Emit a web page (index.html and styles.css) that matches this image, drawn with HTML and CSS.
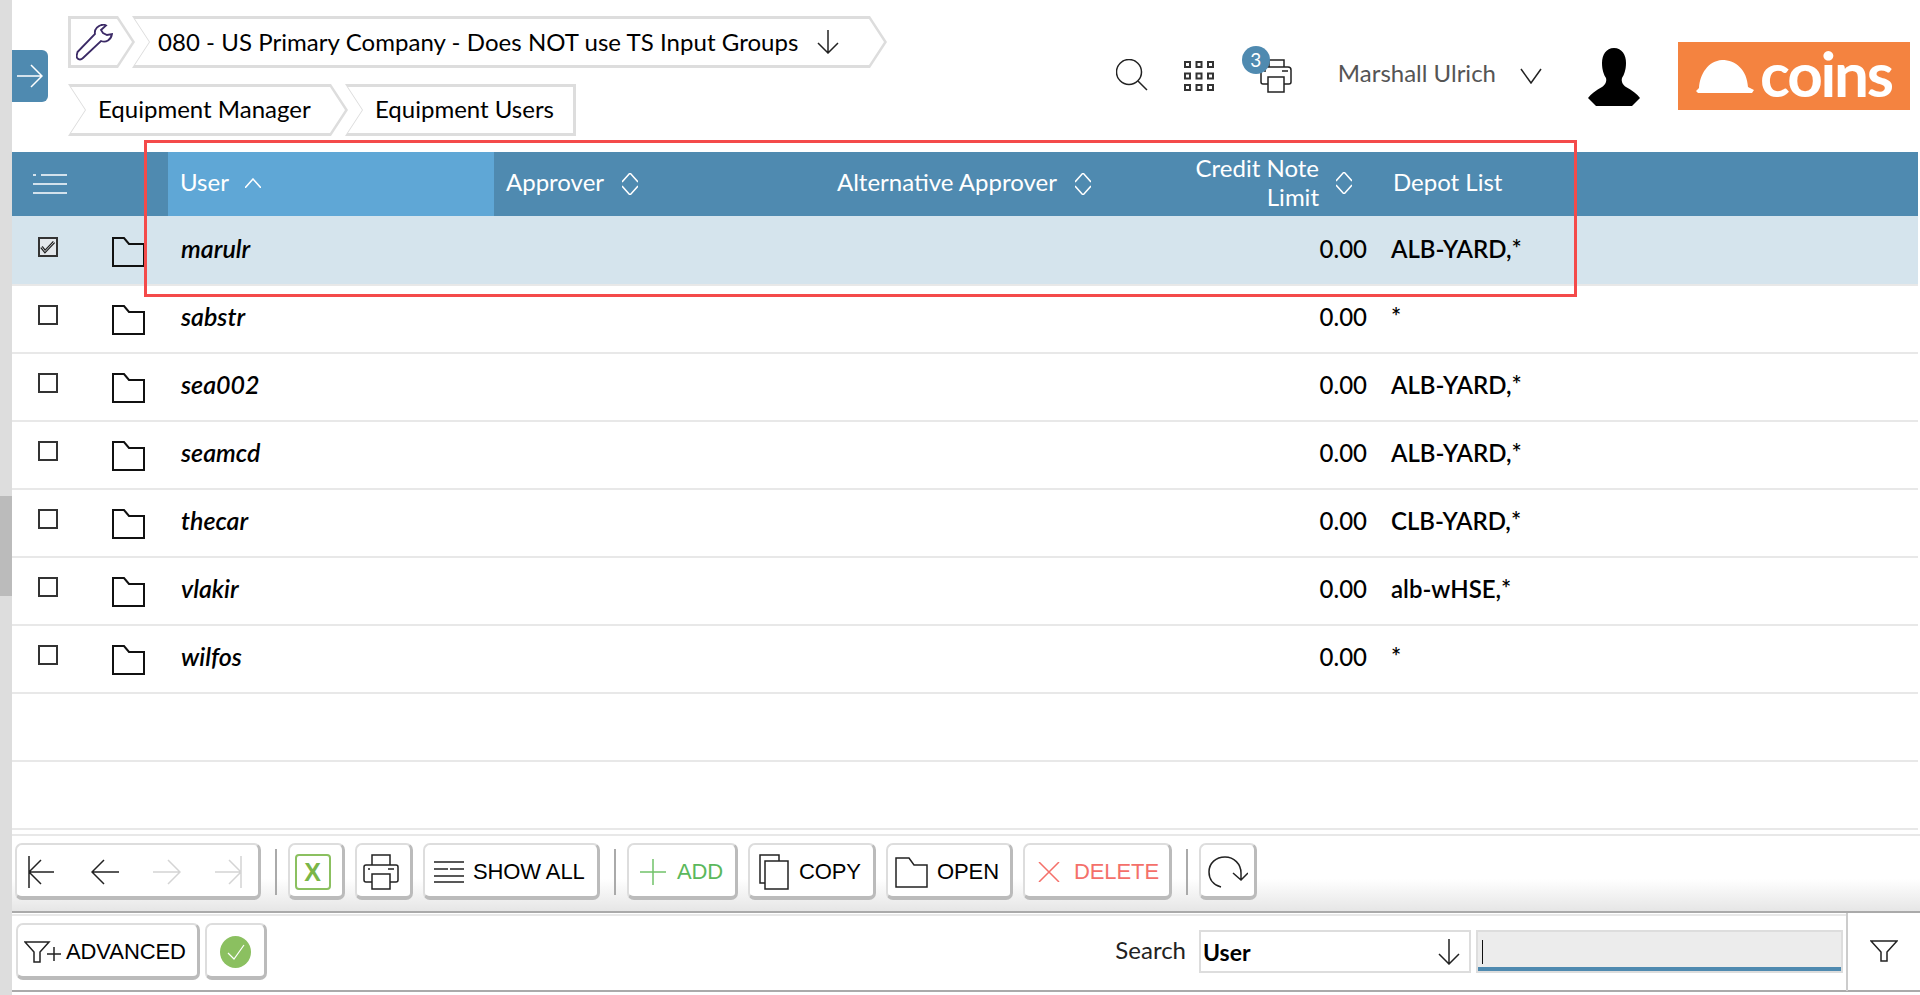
FILE: index.html
```html
<!DOCTYPE html>
<html lang="en">
<head>
    <title>Equipment Users</title>
    <link rel="stylesheet" href="styles.css">
</head>
<body>
    <div class="strip"><div class="strip-thumb"></div></div>
    <div class="main">
        <header class="top">
            <div class="side-tab">
                <svg width="26" height="24" viewBox="0 0 26 24" class="line white"><path d="M0 12H25M14 1L25 12L14 23"/></svg>
            </div>
            <div class="crumbs">
                <div class="crumb-row">
                    <div class="crumb crumb-flat crumb-tool">
                        <svg width="37" height="37" viewBox="0 0 37 37" class="line purple"><path d="M1.500 28L19 10C18 5 22 1 28 0.500L30 1.500L25 6L27 9L31 11L36 10C35 16 30 19 25 17L7 34C4 37 0 35 0.800 31Z"/></svg>
                    </div>
                    <div class="crumb crumb-company">
                        <span>080 - US Primary Company - Does NOT use TS Input Groups</span>
                        <svg width="22" height="24" viewBox="0 0 22 24" class="line dark"><path d="M11 0V23M1 13L11 23L21 13"/></svg>
                    </div>
                </div>
                <div class="crumb-row">
                    <div class="crumb crumb-manager"><span>Equipment Manager</span></div>
                    <div class="crumb crumb-end crumb-users"><span>Equipment Users</span></div>
                </div>
            </div>
            <div class="top-right">
                <svg class="line dark ic-search" width="32" height="32" viewBox="0 0 32 32"><circle cx="13" cy="13" r="12.500"/><path d="M22 22L31 31"/></svg>
                <svg class="ic-grid" width="30" height="30" viewBox="0 0 30 30" fill="none" stroke="#333" stroke-width="2">
                    <rect x="1" y="1" width="5" height="5"/><rect x="12.500" y="1" width="5" height="5"/><rect x="24" y="1" width="5" height="5"/>
                    <rect x="1" y="12.500" width="5" height="5"/><rect x="12.500" y="12.500" width="5" height="5"/><rect x="24" y="12.500" width="5" height="5"/>
                    <rect x="1" y="24" width="5" height="5"/><rect x="12.500" y="24" width="5" height="5"/><rect x="24" y="24" width="5" height="5"/>
                </svg>
                <div class="printer-wrap">
                    <svg class="line dark" width="32" height="34" viewBox="0 0 32 34"><path d="M9 8V1H24V8M8 25H3C2 25 1 24 1 23V11C1 9 2 8 4 8H28C30 8 31 9 31 11V23C31 24 30 25 29 25H24M8 18H24V33H8Z"/><path d="M4 12H6M22 12H28"/></svg>
                    <span class="badge">3</span>
                </div>
                <span class="user-name">Marshall Ulrich</span>
                <svg class="line dark ic-chevron" width="22" height="16" viewBox="0 0 22 16"><path d="M1 1L11 15L21 1"/></svg>
                <svg class="ic-avatar" width="52" height="58" viewBox="0 0 52 58"><path d="M26 0C34 0 38 7 38 15C38 22 36 27 34 30C33 34 35 37 38 39C44 42 49 46 52 50L44 58H8L0 50C3 46 8 42 14 39C17 37 19 34 18 30C16 27 14 22 14 15C14 7 18 0 26 0Z"/></svg>
                <div class="logo">
                    <svg width="58" height="33" viewBox="0 0 58 33"><path d="M0 31L3 28C4 14 12 1 26 0C40 0 51 10 52 27L58 30L56 33H2Z" fill="#fff"/></svg>
                    <span class="logo-text">coins</span>
                </div>
            </div>
        </header>

        <div class="grid-head">
            <div class="cell-menu">
                <svg width="34" height="20" viewBox="0 0 34 20" fill="none" stroke="#fff" stroke-width="1.500"><path d="M0 1H3M8 1H34M0 10H34M0 19H34"/></svg>
            </div>
            <div class="head-cell head-sorted">User
                <svg class="line white" width="16" height="10" viewBox="0 0 16 10"><path d="M0 10L8 1L16 10"/></svg>
            </div>
            <div class="head-cell">Approver
                <svg class="line white sort" width="16" height="22" viewBox="0 0 16 22"><path d="M0 9L8 0L16 9M0 13L8 22L16 13"/></svg>
            </div>
            <div class="head-cell head-alt">Alternative Approver
                <svg class="line white sort" width="16" height="22" viewBox="0 0 16 22"><path d="M0 9L8 0L16 9M0 13L8 22L16 13"/></svg>
            </div>
            <div class="head-cell head-num"><span class="head-wrap">Credit Note Limit</span>
                <svg class="line white sort" width="16" height="22" viewBox="0 0 16 22"><path d="M0 9L8 0L16 9M0 13L8 22L16 13"/></svg>
            </div>
            <div class="head-cell head-depot">Depot List</div>
        </div>

        <div class="rows">
            <div class="row row-selected">
                <div class="cell-icons">
                    <span class="checkbox"><svg width="16" height="14" viewBox="0 0 16 14" fill="none"><path d="M1.500 7L5 11.500L14 2" stroke="#222" stroke-width="3"/><path d="M1.500 7L5 11.500L14 2" stroke="#e4e8ec" stroke-width="0.800"/></svg></span>
                    <svg class="folder" width="33" height="30" viewBox="0 0 33 30"><path d="M1 1H12L17 7H32V29H1Z"/></svg>
                </div>
                <div class="cell-user">marulr</div><div></div><div></div><div class="cell-num">0.00</div><div class="cell-depot">ALB-YARD,*</div>
            </div>
            <div class="row">
                <div class="cell-icons">
                    <span class="checkbox"></span>
                    <svg class="folder" width="33" height="30" viewBox="0 0 33 30"><path d="M1 1H12L17 7H32V29H1Z"/></svg>
                </div>
                <div class="cell-user">sabstr</div><div></div><div></div><div class="cell-num">0.00</div><div class="cell-depot">*</div>
            </div>
            <div class="row">
                <div class="cell-icons">
                    <span class="checkbox"></span>
                    <svg class="folder" width="33" height="30" viewBox="0 0 33 30"><path d="M1 1H12L17 7H32V29H1Z"/></svg>
                </div>
                <div class="cell-user">sea002</div><div></div><div></div><div class="cell-num">0.00</div><div class="cell-depot">ALB-YARD,*</div>
            </div>
            <div class="row">
                <div class="cell-icons">
                    <span class="checkbox"></span>
                    <svg class="folder" width="33" height="30" viewBox="0 0 33 30"><path d="M1 1H12L17 7H32V29H1Z"/></svg>
                </div>
                <div class="cell-user">seamcd</div><div></div><div></div><div class="cell-num">0.00</div><div class="cell-depot">ALB-YARD,*</div>
            </div>
            <div class="row">
                <div class="cell-icons">
                    <span class="checkbox"></span>
                    <svg class="folder" width="33" height="30" viewBox="0 0 33 30"><path d="M1 1H12L17 7H32V29H1Z"/></svg>
                </div>
                <div class="cell-user">thecar</div><div></div><div></div><div class="cell-num">0.00</div><div class="cell-depot">CLB-YARD,*</div>
            </div>
            <div class="row">
                <div class="cell-icons">
                    <span class="checkbox"></span>
                    <svg class="folder" width="33" height="30" viewBox="0 0 33 30"><path d="M1 1H12L17 7H32V29H1Z"/></svg>
                </div>
                <div class="cell-user">vlakir</div><div></div><div></div><div class="cell-num">0.00</div><div class="cell-depot">alb-wHSE,*</div>
            </div>
            <div class="row">
                <div class="cell-icons">
                    <span class="checkbox"></span>
                    <svg class="folder" width="33" height="30" viewBox="0 0 33 30"><path d="M1 1H12L17 7H32V29H1Z"/></svg>
                </div>
                <div class="cell-user">wilfos</div><div></div><div></div><div class="cell-num">0.00</div><div class="cell-depot">*</div>
            </div>
            <div class="row"></div>
            <div class="row"></div>
        </div>

        <div class="toolbar">
            <div class="btn btn-nav">
                <svg class="line dark" width="26" height="32" viewBox="0 0 26 32"><path d="M1 0V32M26 16H1M13 4L1 16L13 28"/></svg>
                <svg class="line dark" width="28" height="26" viewBox="0 0 28 26"><path d="M28 13H1M13 1L1 13L13 25"/></svg>
                <svg class="line faint" width="28" height="26" viewBox="0 0 28 26"><path d="M0 13H27M15 1L27 13L15 25"/></svg>
                <svg class="line faint" width="27" height="32" viewBox="0 0 27 32"><path d="M26 0V32M0 16H26M14 4L26 16L14 28"/></svg>
            </div>
            <span class="sep"></span>
            <div class="btn btn-excel"><span class="excel-box">X</span></div>
            <div class="btn btn-print">
                <svg class="line dark" width="36" height="36" viewBox="0 0 36 36"><path d="M9 11V1H27V11M9 28H3C2 28 1 27 1 26V13C1 12 2 11 3 11H33C34 11 35 12 35 13V26C35 27 34 28 33 28H27M9 20H27V35H9Z"/><path d="M5 15H7M25 15H31"/></svg>
            </div>
            <div class="btn btn-text btn-showall">
                <svg class="line dark" width="30" height="22" viewBox="0 0 30 22"><path d="M0 1H30M0 8H14M16 8H30M0 15H30M0 21H30"/></svg>
                <span>SHOW ALL</span>
            </div>
            <span class="sep"></span>
            <div class="btn btn-text btn-add">
                <svg class="line green" width="26" height="26" viewBox="0 0 26 26"><path d="M13 0V26M0 13H26"/></svg>
                <span>ADD</span>
            </div>
            <div class="btn btn-text btn-copy">
                <svg class="line dark" width="30" height="36" viewBox="0 0 30 36"><path d="M6 29H1V1H20V7"/><path d="M6 7H29V35H6Z"/></svg>
                <span>COPY</span>
            </div>
            <div class="btn btn-text btn-open">
                <svg class="line dark" width="33" height="31" viewBox="0 0 33 31"><path d="M1 1H14L19 8H32V30H1Z"/></svg>
                <span>OPEN</span>
            </div>
            <div class="btn btn-text btn-delete">
                <svg class="line red" width="22" height="20" viewBox="0 0 22 20"><path d="M1 0L21 20M21 0L1 20"/></svg>
                <span>DELETE</span>
            </div>
            <span class="sep"></span>
            <div class="btn btn-refresh">
                <svg class="line dark" width="40" height="32" viewBox="0 0 40 32"><path d="M13 31C5 29 1 23 1 16C1 7 8 1 17 1C26 1 33 8 33 17V24M25 17L33 24L40 17"/></svg>
            </div>
        </div>

        <div class="search-bar">
            <div class="btn btn-text btn-advanced">
                <svg class="line dark" width="37" height="22" viewBox="0 0 37 22"><path d="M1 1H25L16 11V21H10V11Z"/><path d="M23 13H37M30 6V20"/></svg>
                <span>ADVANCED</span>
            </div>
            <div class="btn btn-ok">
                <svg width="31" height="32" viewBox="0 0 31 32"><ellipse cx="15.500" cy="16" rx="15.500" ry="16" fill="#8bc060"/><path d="M8 17L14 23L24 9" fill="none" stroke="#fff" stroke-width="1.200"/></svg>
            </div>
            <span class="search-label">Search</span>
            <div class="search-select">
                <span>User</span>
                <svg class="line dark" width="22" height="26" viewBox="0 0 22 26"><path d="M11 0V25M1 15L11 25L21 15"/></svg>
            </div>
            <div class="search-input"><span class="caret"></span></div>
            <div class="filter-cell">
                <svg class="line dark" width="28" height="22" viewBox="0 0 28 22"><path d="M1 1H27L17 12V21H11V12Z"/></svg>
            </div>
        </div>

        <div class="highlight"></div>
    </div>
</body>
</html>
```

FILE: styles.css
```css
* {
    box-sizing: border-box;
}
body {
    margin: 0;
    height: 995px;
    display: flex;
    overflow: hidden;
    background-color: #fff;
    font-family: "Lato", "Liberation Sans", sans-serif;
    font-size: 24px;
    color: #000;
}
.strip {
    width: 12px;
    flex-shrink: 0;
    background-color: #ddd;
    padding-top: 496px;
}
.strip-thumb {
    height: 100px;
    background-color: #bbb;
}
.main {
    flex: 1;
    position: relative;
    min-width: 0;
}

/* icon strokes */
.line {
    fill: none;
    stroke-width: 1.500;
    flex-shrink: 0;
}
.white { stroke: #fff; }
.dark { stroke: #222; }
.purple { stroke: #3b2a66; stroke-width: 1.800; }
.faint { stroke: #d4d4d4; }
.green { stroke: #72c26a; }
.red { stroke: #f4706a; }

/* top header */
.top {
    height: 152px;
    display: flex;
    align-items: flex-start;
}
.side-tab {
    width: 36px;
    height: 52px;
    margin-top: 50px;
    margin-right: 20px;
    background-color: #4f8ab0;
    border-radius: 0 6px 6px 0;
    display: flex;
    align-items: center;
    padding-left: 5px;
}
.crumbs {
    padding-top: 16px;
    display: flex;
    flex-direction: column;
    gap: 16px;
}
.crumb-row {
    display: flex;
    height: 52px;
}
.crumb {
    position: relative;
    height: 52px;
    display: flex;
    align-items: center;
    background-color: #ddd;
    clip-path: polygon(0 0, calc(100% - 17px) 0, 100% 50%, calc(100% - 17px) 100%, 0 100%, 17px 50%);
}
.crumb::before {
    content: "";
    position: absolute;
    inset: 3px;
    background-color: #fff;
    clip-path: polygon(0 0, calc(100% - 15px) 0, 100% 50%, calc(100% - 15px) 100%, 0 100%, 15px 50%);
}
.crumb > * {
    position: relative;
}
.crumb span {
    margin-top: -3px;
}
.crumb-flat {
    clip-path: polygon(0 0, calc(100% - 17px) 0, 100% 50%, calc(100% - 17px) 100%, 0 100%);
}
.crumb-flat::before {
    clip-path: polygon(0 0, calc(100% - 15px) 0, 100% 50%, calc(100% - 15px) 100%, 0 100%);
}
.crumb-end {
    clip-path: polygon(0 0, 100% 0, 100% 100%, 0 100%, 17px 50%);
}
.crumb-end::before {
    clip-path: polygon(0 0, 100% 0, 100% 100%, 0 100%, 15px 50%);
}
.crumb-tool {
    width: 67px;
    padding-left: 8px;
}
.crumb-company {
    width: 755px;
    margin-left: -3px;
    padding-left: 26px;
    gap: 19px;
    letter-spacing: 0.05px;
}
.crumb-company span {
    margin-top: -1px;
}
.crumb-manager {
    width: 280px;
    padding-left: 30px;
}
.crumb-users {
    width: 231px;
    margin-left: -3px;
    padding-left: 30px;
}
.top-right {
    margin-left: auto;
    padding-top: 42px;
    padding-right: 10px;
    display: flex;
    align-items: flex-start;
}
.ic-search {
    margin-top: 17px;
}
.ic-grid {
    margin-top: 19px;
    margin-left: 36px;
}
.printer-wrap {
    position: relative;
    margin-top: 17px;
    margin-left: 46px;
    line-height: 0;
}
.badge {
    position: absolute;
    left: -18px;
    top: -13px;
    width: 28px;
    height: 28px;
    border-radius: 50%;
    background-color: #4f8ab0;
    color: #fff;
    font-size: 19px;
    line-height: 27px;
    text-align: center;
}
.user-name {
    margin-left: 46px;
    margin-top: 16px;
    line-height: 30px;
    color: #555;
    white-space: nowrap;
}
.ic-chevron {
    margin-left: 24px;
    margin-top: 26px;
}
.ic-avatar {
    margin-left: 46px;
    margin-top: 6px;
}
.logo {
    width: 232px;
    height: 68px;
    margin-left: 38px;
    background-color: #f48340;
    display: flex;
    align-items: center;
    padding-left: 18px;
    gap: 6px;
}
.logo svg {
    margin-top: 1px;
}
.logo-text {
    color: #fff;
    font-size: 62px;
    font-weight: 700;
    line-height: 68px;
    letter-spacing: -2.200px;
    margin-top: -6px;
}

/* grid */
.grid-head,
.row {
    display: grid;
    grid-template-columns: 156px 326px 332px 360px 194px 1fr;
    margin-right: 2px;
}
.grid-head {
    height: 64px;
    grid-template-rows: 64px;
    background-color: #4f8ab0;
    color: #fff;
}
.cell-menu {
    padding-left: 21px;
    display: flex;
    align-items: center;
}
.head-cell {
    display: flex;
    align-items: center;
    gap: 18px;
    padding-left: 12px;
    padding-bottom: 6px;
}
.head-cell svg {
    margin-top: 6px;
}
.head-sorted {
    background-color: #5fa7d6;
    gap: 16px;
    padding-left: 12px;
}
.head-sorted svg {
    margin-top: 4px;
}
.head-alt {
    padding-left: 11px;
}
.head-num {
    justify-content: flex-end;
    text-align: right;
    padding-left: 0;
    padding-right: 28px;
    padding-bottom: 4px;
    line-height: 29px;
    gap: 17px;
}
.head-num svg {
    margin-top: 2px;
}
.head-wrap {
    width: 130px;
}
.head-depot {
    padding-left: 13px;
}
.row {
    height: 68px;
    border-bottom: 2px solid #e8e8e8;
    align-items: center;
    padding-bottom: 6px;
}
.row-selected {
    height: 70px;
    padding-bottom: 4px;
    background-color: #d5e4ed;
}
.cell-icons {
    display: flex;
    align-items: center;
    padding-left: 26px;
}
.checkbox {
    width: 20px;
    height: 20px;
    border: 2px solid #333;
    background-color: #fff;
    margin-top: -3px;
    display: flex;
    align-items: center;
    justify-content: center;
}
.row-selected .checkbox {
    background-color: #e4e8ec;
}
.folder {
    margin-left: 54px;
    fill: none;
    stroke: #111;
    stroke-width: 2;
    margin-top: 8px;
}
.cell-user {
    padding-left: 13px;
    font-size: 25px;
    font-style: italic;
    font-weight: 600;
}
.cell-num {
    text-align: right;
    padding-right: 13px;
    font-weight: 500;
}
.cell-depot {
    padding-left: 11px;
    font-weight: 600;
}

/* bottom buttons */
.toolbar {
    height: 83px;
    display: flex;
    align-items: flex-start;
    gap: 10px;
    padding: 13px 0 0 3px;
    background: linear-gradient(#fff 60%, #e6e6e6);
    border-bottom: 2px solid #aaa;
    position: relative;
}
.toolbar::before {
    content: "";
    position: absolute;
    left: 0;
    right: 0;
    top: 4px;
    height: 2px;
    background-color: #e8e8e8;
}
.btn {
    height: 57px;
    padding-top: 3px;
    display: flex;
    align-items: center;
    justify-content: center;
    background-color: #fff;
    border: 2px solid #ddd;
    border-right: 3px solid #bbb;
    border-bottom: 4px solid #bbb;
    border-radius: 7px;
    font-family: "Liberation Sans", Arial, sans-serif;
    font-size: 22px;
    letter-spacing: -0.100px;
    flex-shrink: 0;
}
.btn-text {
    justify-content: flex-start;
}
.btn-nav {
    width: 246px;
    justify-content: flex-start;
    padding-left: 11px;
    gap: 34px;
}
.btn-nav svg:nth-child(2) {
    margin-left: 3px;
}
.sep {
    width: 2px;
    height: 46px;
    margin: 6px 1px 0 4px;
    background-color: #aaa;
}
.btn-excel {
    width: 57px;
    padding-right: 7px;
}
.excel-box {
    width: 36px;
    height: 36px;
    border: 2px solid #8bc060;
    border-radius: 4px;
    color: #7ab648;
    font-weight: 700;
    font-size: 25px;
    line-height: 32px;
    text-align: center;
}
.btn-print {
    width: 58px;
    padding-right: 6px;
}
.btn-showall { width: 177px; padding-left: 9px; gap: 9px; }
.btn-add { width: 111px; padding-left: 11px; gap: 11px; color: #5bb85c; }
.btn-copy { width: 128px; padding-left: 9px; gap: 10px; }
.btn-open { width: 127px; padding-left: 7px; gap: 9px; }
.btn-delete { width: 149px; padding-left: 13px; gap: 14px; color: #f4706a; }
.btn-refresh { width: 58px; }
.search-bar {
    height: 79px;
    display: flex;
    align-items: flex-start;
    padding: 10px 0 0 4px;
    border-bottom: 2px solid #aaa;
    position: relative;
}
.search-bar::before {
    content: "";
    position: absolute;
    left: 0;
    right: 74px;
    top: 1px;
    height: 2px;
    background-color: #e8e8e8;
}
.btn-advanced {
    width: 184px;
    padding-left: 6px;
    gap: 5px;
}
.btn-ok {
    width: 62px;
    margin-left: 5px;
}
.search-label {
    margin-left: auto;
    margin-top: 12px;
    margin-right: 13px;
    line-height: 30px;
    color: #222;
}
.search-select {
    width: 272px;
    height: 43px;
    margin-top: 7px;
    border: 2px solid #ddd;
    padding: 0 9px 0 2px;
    display: flex;
    align-items: center;
    justify-content: space-between;
    font-weight: 700;
    font-size: 23px;
}
.search-input {
    width: 367px;
    height: 43px;
    margin-top: 7px;
    margin-left: 5px;
    border: 2px solid #ddd;
    background: linear-gradient(#ececec, #ececec) top / 100% calc(100% - 4px) no-repeat, #4f8ab0;
    padding: 8px 0 0 4px;
}
.caret {
    display: block;
    width: 1px;
    height: 24px;
    background-color: #111;
}
.filter-cell {
    width: 74px;
    height: 78px;
    margin-top: -10px;
    margin-left: 3px;
    border-left: 2px solid #ccc;
    display: flex;
    align-items: center;
    justify-content: center;
}
.filter-cell svg {
    margin-top: -3px;
}

/* red annotation box drawn over the table */
.highlight {
    position: absolute;
    left: 132px;
    top: 140px;
    width: 1433px;
    height: 157px;
    border: 3px solid #f44a4a;
    pointer-events: none;
}
```
